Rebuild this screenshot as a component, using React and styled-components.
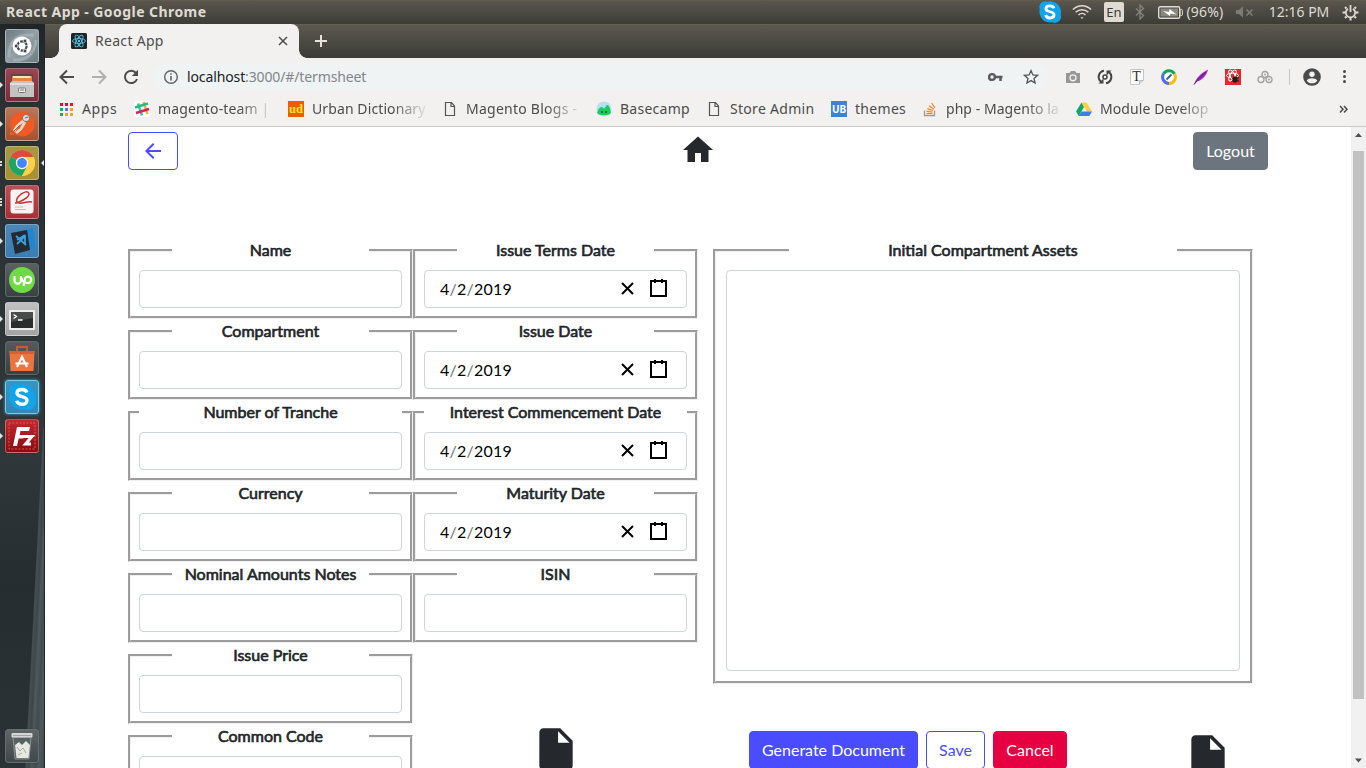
import React from "react";
import styled, { createGlobalStyle } from "styled-components";

const GlobalStyle = createGlobalStyle`
  *, *::before, *::after { box-sizing: border-box; }
  html, body, #root { height: 100%; }
  body { margin: 0; overflow: hidden; background: #fff; }
`;

const UI_FONT = `"Noto Sans", "Open Sans", sans-serif`;
const PAGE_FONT = `Lato, "Liberation Sans", sans-serif`;

const Desktop = styled.div`
  width: 1366px;
  height: 768px;
  display: flex;
  flex-direction: column;
  overflow: hidden;
`;

/* ---------- system menu bar ---------- */
const MenuBar = styled.header`
  flex: none;
  height: 24px;
  display: flex;
  align-items: center;
  padding: 0 7px 0 6px;
  background: linear-gradient(#64614f 0, #5a564d 1px, #3d3c37 24px);
  font: 14px/24px ${UI_FONT};
  color: #dfdbd2;
`;
const WindowTitle = styled.span`
  flex: 1;
  font-weight: 700;
  letter-spacing: 0.44px;
  white-space: nowrap;
`;
const Indicator = styled.div`
  flex: none;
  width: ${(p) => p.$w}px;
  margin-left: ${(p) => p.$gap}px;
  height: 24px;
  display: flex;
  align-items: center;
  justify-content: center;
  white-space: nowrap;
  letter-spacing: ${(p) => p.$ls || 0}px;
  svg { flex: none; }
`;
const Keyboard = styled.div`
  width: 20px;
  height: 20px;
  border-radius: 2px;
  background: #dfdbd2;
  color: #3d3c37;
  font: 13px/20px ${UI_FONT};
  text-align: center;
`;

const Workspace = styled.div`
  flex: 1;
  min-height: 0;
  display: flex;
`;

/* ---------- launcher ---------- */
const Launcher = styled.nav`
  flex: none;
  width: 45px;
  display: flex;
  flex-direction: column;
  padding: 5px 0 5px 0;
  gap: 5px;
  border-right: 1px solid #22282a;
  background:
    linear-gradient(93deg, transparent 69%, #465053 71%, #3d4649 76%, #4f585b 80%, #424b4e 86%, #50595c 92%, #3f484b 100%) 0 100% / 100% 340px no-repeat,
    linear-gradient(#1f2528 0, #2a3134 60px, #2c3437 250px, #30383b 420px, #262d30 560px, #2b3336 100%);
`;
const LaunchRow = styled.div`
  flex: none;
  height: 34px;
  display: flex;
  align-items: center;
  margin-top: ${(p) => (p.$last ? "auto" : "0")};
`;
const Pips = styled.div`
  width: 5px;
  height: 34px;
  display: flex;
  flex-direction: column;
  align-items: flex-start;
  justify-content: center;
  gap: 1px;
`;
const Arrow = styled.i`
  border: 3px solid transparent;
  border-left-color: ${(p) => (p.$left ? "transparent" : "#e4e6e6")};
  border-right-color: ${(p) => (p.$left ? "#e4e6e6" : "transparent")};
  border-left-width: ${(p) => (p.$left ? 0 : 3)}px;
  border-right-width: ${(p) => (p.$left ? 3 : 0)}px;
`;
const Pip = styled.i`
  width: 2px;
  height: 2px;
  background: #d7dada;
`;
const Tile = styled.div`
  width: 34px;
  height: 34px;
  margin-right: 2px;
  border-radius: 3px;
  border: 1px solid ${(p) => p.$edge || "rgba(255,255,255,.3)"};
  background: ${(p) => p.$bg};
  box-shadow: ${(p) => (p.$glow ? "0 0 3px #4ab4dc" : "0 0 1px rgba(0,0,0,.6)")};
  svg { display: block; margin: -1px; }
`;

/* ---------- browser ---------- */
const Browser = styled.main`
  flex: 1;
  min-width: 0;
  display: flex;
  flex-direction: column;
`;
const TabStrip = styled.div`
  flex: none;
  height: 34px;
  display: flex;
  padding-left: 14px;
  background: linear-gradient(#6b6856 0, #5b594f 1px, #3c3b36 34px);
`;
const Tab = styled.div`
  position: relative;
  width: 240px;
  height: 34px;
  display: flex;
  align-items: center;
  padding: 0 11px 0 12px;
  border-radius: 8px 8px 0 0;
  background: #f2f1f0;
  color: #4c4c4c;
  font: 14px/34px ${UI_FONT};
  &::before, &::after {
    content: "";
    position: absolute;
    bottom: 0;
    width: 8px;
    height: 8px;
  }
  &::before { left: -8px; background: radial-gradient(circle at 0 0, transparent 7.5px, #f2f1f0 8px); }
  &::after { right: -8px; background: radial-gradient(circle at 100% 0, transparent 7.5px, #f2f1f0 8px); }
`;
const TabTitle = styled.span`
  flex: 1;
  margin-left: 8px;
  letter-spacing: 0.3px;
`;
const NewTab = styled.div`
  margin: 11px 0 0 16px;
  svg { display: block; }
`;
const Toolbar = styled.div`
  flex: none;
  height: 37px;
  display: flex;
  align-items: center;
  padding: 0 14px;
  background: #f2f1f0;
`;
const NavButton = styled.div`
  width: 16px;
  height: 16px;
  margin-right: 16px;
  svg { display: block; }
`;
const Omnibox = styled.div`
  width: 896px;
  height: 28px;
  margin-left: -2px;
  display: flex;
  align-items: center;
  padding: 0 10px;
  border-radius: 14px;
  background: #eff3f4;
  color: #80868b;
  font: 14px/28px ${UI_FONT};
  svg { display: block; }
`;
const Url = styled.span`
  flex: 1;
  margin-left: 8px;
  letter-spacing: -0.12px;
  b { font-weight: 400; color: #202124; }
`;
const StarSlot = styled.div`
  margin-left: 20px;
`;
const Extensions = styled.div`
  display: flex;
  align-items: center;
  gap: 16px;
  margin-left: 16px;
  svg { display: block; }
`;
const Divider = styled.div`
  width: 1px;
  height: 16px;
  margin: 0 13px 0 16px;
  background: #c4c4c4;
`;
const MenuDots = styled.div`
  margin-left: 22px;
  display: flex;
  flex-direction: column;
  gap: 2px;
`;
const Dot = styled.i`
  width: 3px;
  height: 3px;
  border-radius: 50%;
  background: #4a4a4a;
`;
const BookmarkBar = styled.div`
  flex: none;
  height: 32px;
  display: flex;
  align-items: flex-start;
  padding: 4px 0 0 13px;
  background: #f2f1f0;
  border-bottom: 1px solid #cbcac9;
  color: #4c4c4c;
  font: 14px/20px ${UI_FONT};
`;
const Bookmark = styled.div`
  flex: none;
  width: ${(p) => p.$w}px;
  height: 20px;
  display: flex;
  align-items: center;
  gap: 8px;
  svg { display: block; flex: none; }
`;
const BookmarkText = styled.span`
  white-space: nowrap;
  letter-spacing: ${(p) => p.$ls || 0}px;
  mask-image: ${(p) => (p.$fade ? "linear-gradient(90deg, #000 80px, rgba(0,0,0,.15) 112px)" : "none")};
`;
const More = styled.div`
  margin: 2px 0 0 auto;
  padding-right: 18px;
  svg { display: block; }
`;

/* ---------- web page ---------- */
const Viewport = styled.div`
  flex: 1;
  min-height: 0;
  display: flex;
  background: #fff;
`;
const Page = styled.div`
  flex: 1;
  min-width: 0;
  overflow: hidden;
  padding: 5px 83px 0;
  color: #212529;
  font: 16px/24px ${PAGE_FONT};
`;
const Scrollbar = styled.div`
  flex: none;
  width: 15px;
  display: flex;
  flex-direction: column;
  align-items: center;
  background: #f1f1f1;
  svg { display: block; flex: none; }
`;
const Thumb = styled.div`
  width: 11px;
  height: 548px;
  margin: 9px 0 auto;
  background: #c1c1c1;
`;
const TopRow = styled.div`
  width: 1140px;
  height: 38px;
  display: grid;
  grid-template-columns: 1fr 36px 1fr;
  svg { display: block; }
`;
const Button = styled.button`
  height: 38px;
  width: ${(p) => (p.$w ? p.$w + "px" : "auto")};
  padding: 0;
  display: flex;
  align-items: center;
  justify-content: center;
  justify-self: ${(p) => (p.$end ? "end" : "start")};
  border: 1px solid ${(p) => p.$line};
  border-radius: 4px;
  background: ${(p) => p.$fill || "#fff"};
  color: ${(p) => p.$ink || "#fff"};
  font: 16px/24px ${PAGE_FONT};
  white-space: nowrap;
`;
const Form = styled.div`
  width: 1140px;
  display: grid;
  grid-template-columns: 285px 285px 570px;
  margin-top: 68px;
`;
const Column = styled.div`
  display: flex;
  flex-direction: column;
  padding: ${(p) => (p.$wide ? "0 15px" : "0")};
`;
const Group = styled.fieldset`
  width: 100%;
  min-width: 0;
  margin: 0;
  padding: ${(p) => p.$pad || 8}px;
  padding-top: 8px;
  border: 3px groove #f0f0f0;
`;
const Legend = styled.legend`
  width: ${(p) => p.$w || "75%"};
  height: 24px;
  margin: 0 auto;
  padding: 0;
  text-align: center;
  font-weight: 400;
  -webkit-text-stroke: 0.65px #212529;
`;
const Input = styled.div`
  width: 100%;
  height: ${(p) => p.$h || 38}px;
  display: flex;
  align-items: center;
  padding: 0 18px 0 15px;
  border: 1px solid #ced4da;
  border-radius: 4px;
  background: #fff;
  svg { display: block; margin-left: 12px; margin-top: -1px; }
`;
const DateValue = styled.span`
  flex: 1;
  color: #000;
  letter-spacing: 0.25px;
  i { font-style: normal; color: #6d6d6d; }
`;
const FileSlot = styled.div`
  margin: ${(p) => p.$m};
  svg { display: block; }
`;
const Actions = styled.div`
  display: flex;
  gap: 8px;
  margin: 47px 0 0 36px;
`;

/* ---------- launcher artwork ---------- */
const S34 = ({ children }) => (
  <svg width="34" height="34" viewBox="0 0 34 34">{children}</svg>
);
const Ubuntu = () => (
  <S34>
    <path d="M4 28C4 10 12 5 29 6M8 31c12 1 22-5 23-20" stroke="#b1bbc0" strokeWidth="3" fill="none" opacity=".6" />
    <circle cx="17" cy="17" r="9.5" fill="#fff" />
    <circle cx="17" cy="17" r="4.6" fill="none" stroke="#444b50" strokeWidth="2.2" strokeDasharray="8.4 1.2" />
    <g fill="#444b50" stroke="#fff" strokeWidth=".7">
      <circle cx="11.2" cy="17" r="1.9" /><circle cx="20" cy="12" r="1.9" /><circle cx="20" cy="22" r="1.9" />
    </g>
  </S34>
);
const Files = () => (
  <S34>
    <path d="M6 6h22v9H6z" fill="#5b4a42" /><path d="M7 8h20v7H7z" fill="#e8843c" />
    <path d="M8 8h17l1 2H8z" fill="#fbe3c5" /><path d="M5 15l2-2h20l2 2v14H5z" fill="#c3c3c1" />
    <path d="M5 15h24v2H5z" fill="#dededc" /><rect x="13.5" y="20" width="7" height="4.5" rx="1" fill="#eee" stroke="#777" />
    <path d="M15 22h4" stroke="#777" />
  </S34>
);
const Postman = () => (
  <S34>
    <circle cx="17.3" cy="17" r="12.3" fill="#f15a24" />
    <path d="M5 24l5 4H5z" fill="#f15a24" />
    <path d="M19 13l-7 6-3 5M20 15l-4 7-5 4" stroke="#efd9c9" strokeWidth="2.6" fill="none" />
    <circle cx="21" cy="11" r="3.6" fill="#d8d8d4" stroke="#6d6662" strokeWidth=".8" />
    <path d="M20 11l3-1" stroke="#6d6662" />
    <path d="M9 24l6-6" stroke="#6d6662" strokeWidth=".9" />
  </S34>
);
const Chrome = () => (
  <S34>
    <circle cx="17" cy="17" r="13" fill="#ffcf45" />
    <path d="M17 17L5.7 10.5A13 13 0 0 1 28.3 10.5z" fill="#dd4b3e" />
    <path d="M17 17L5.7 10.5A13 13 0 0 0 17 30l5-9z" fill="#1fa463" />
    <path d="M17 11h11.5A13 13 0 0 1 17 30l5.2-10z" fill="#ffcf45" />
    <circle cx="17" cy="17" r="6.2" fill="#f3f3f0" /><circle cx="17" cy="17" r="4.9" fill="#4285f4" />
  </S34>
);
const Evince = () => (
  <S34>
    <rect x="5.5" y="4.5" width="23" height="24" rx="3" fill="#f5f4f2" />
    <path d="M10 18c3 0 14-5 14-9s-7-2-11 3c-3 4-1 7 4 6 4-.5 7-2 10-1" fill="none" stroke="#cc3236" strokeWidth="1.5" />
    <path d="M10 22h8M10 24.5h11" stroke="#d8a5a5" strokeWidth=".8" />
  </S34>
);
const Code = () => (
  <S34>
    <path d="M6 10l14-4 8-2 2 20-8 3z" fill="#1f86cf" /><path d="M6 9l16-3 3 20-15 4z" fill="#242a33" />
    <path d="M20 11l-8 5M11 12l10 9M20 11v9M12 20l8-8" stroke="#3c9fe0" strokeWidth="1.8" fill="none" />
  </S34>
);
const Upwork = () => (
  <S34>
    <circle cx="17" cy="17" r="13" fill="#6fda44" />
    <path d="M9.5 13v4.5a3.2 3.2 0 0 0 6.4 0V13M15.9 14c1 3 2 4.500 3.500 5.500M18.500 23l1.500-7.500a3.200 3.200 0 1 1 2.500 4.500c-2 0-3.500-1.500-4.500-3" fill="none" stroke="#fff" strokeWidth="2.200" />
  </S34>
);
const Terminal = () => (
  <S34>
    <rect x="4" y="8" width="26" height="20" rx="1" fill="#ececec" /><rect x="6" y="10" width="22" height="16" fill="#2b2d2d" />
    <path d="M6 10h22v6L6 20z" fill="#4a4c4c" /><path d="M8.500 12.500l3 2-3 2M13 18h4.500" fill="none" stroke="#fff" strokeWidth="1.300" />
  </S34>
);
const Software = () => (
  <S34>
    <path d="M12 10V6h10v4" fill="none" stroke="#c85a38" strokeWidth="2" /><path d="M4.500 10h25l-1 20h-23z" fill="#ec7440" />
    <path d="M4.500 10h25v3h-25z" fill="#d95f35" /><path d="M12 26l5-10 5 10M10.500 22.500h13" fill="none" stroke="#fff" strokeWidth="2.200" />
  </S34>
);
const SkypeMark = ({ size }) => (
  <svg width={size} height={size} viewBox="0 0 34 34">
    <path d="M4 10a7.500 7.500 0 0 1 10-5.500A13 13 0 0 1 30 20a7.500 7.500 0 0 1-10 9.500A13 13 0 0 1 4.500 14z" fill="#10a5ea" />
    <path d="M22 12.500c-1-2.300-3-3-5-3-2.800 0-5 1.200-5 3.500 0 4.800 10 2.600 10 7.400 0 2.600-2.300 3.900-5 3.900-2.500 0-4.600-1.200-5.400-3.600" fill="none" stroke="#fff" strokeWidth="3.400" />
  </svg>
);
const FileZilla = () => (
  <S34>
    <rect x="4" y="4" width="26" height="26" fill="none" stroke="#e56767" strokeDasharray="2 1.500" strokeWidth=".8" />
    <path d="M8 27l4-19h13l-1 4h-8.500l-.8 4H19l-.8 3.600h-4.500L12 27z" fill="#fff" />
    <path d="M17.500 17.500H27l-6.500 7.500H26" stroke="#fff" strokeWidth="3" fill="none" />
  </S34>
);
const Trash = () => (
  <S34>
    <path d="M8 8l2 22h14l2-22z" fill="#596061" stroke="#8d9292" /><path d="M10 16l4-3 3 3 4-4 4 4-1.500 13h-12z" fill="#e6e6e2" />
    <path d="M12 18l3 4 3-3 3 5M13 26l4-2" stroke="#a9aaa6" fill="none" /><rect x="6.500" y="4" width="21" height="4.500" rx="1" fill="#d5d6d4" />
    <path d="M8 6.500h18" stroke="#a0a3a3" />
  </S34>
);

const LAUNCHER = [
  { Icon: Ubuntu, bg: "linear-gradient(135deg,#6c7b83,#93a1a7 50%,#6c7b83)" },
  { Icon: Files, bg: "linear-gradient(#9c4554,#7b2b3d)", arrow: true },
  { Icon: Postman, bg: "linear-gradient(#b8775a,#a5522f)", arrow: true },
  { Icon: Chrome, bg: "linear-gradient(#a8964a,#a89132)", pips: 2, active: true },
  { Icon: Evince, bg: "linear-gradient(#bb5056,#a92e35)", pips: 3 },
  { Icon: Code, bg: "linear-gradient(#4b87b5,#3b7db2)", arrow: true },
  { Icon: Upwork, bg: "linear-gradient(#5b6061,#3c4244)", edge: "#60686a" },
  { Icon: Terminal, bg: "linear-gradient(#c0c0c0,#a3a3a3)", arrow: true },
  { Icon: Software, bg: "linear-gradient(#555a5c,#394042)", edge: "#60686a" },
  { Icon: () => <SkypeMark size={34} />, bg: "linear-gradient(#3a93c0,#3289b7)", edge: "#6ed0f0", glow: true, arrow: true },
  { Icon: FileZilla, bg: "linear-gradient(#c02a30,#8c0a10)", arrow: true },
  { Icon: Trash, bg: "linear-gradient(#5d6566,#3f484a)", edge: "#667072", last: true },
];

/* ---------- small icons ---------- */
const I16 = ({ children, size = 16, box = 16 }) => (
  <svg width={size} height={size} viewBox={`0 0 ${box} ${box}`}>{children}</svg>
);
const PageGlyph = () => (
  <I16><path d="M3.500 1.500h6l3 3.500v9.500h-9zM9 1.500v4h3.500" fill="none" stroke="#555" strokeWidth="1.200" /></I16>
);

const BOOKMARKS = [
  { text: "Apps", w: 76, ls: 0.6, icon: (
    <I16>{["#f00040", "#e8003c", "#f01030", "#18a860", "#3f7fea", "#e8a818", "#18a860", "#f0a818", "#e8a818"].map((c, i) => (
      <rect key={i} x={2 + (i % 3) * 5} y={2 + Math.floor(i / 3) * 5} width="3" height="3" fill={c} />
    ))}</I16>) },
  { text: "magento-team |", fade: true, w: 154, ls: 0.15, icon: (
    <I16><rect width="16" height="16" rx="2" fill="#fff" />
      <path d="M4 2.500l4 12" stroke="#36c5ab" strokeWidth="2.400" /><path d="M9.500 1l4 12" stroke="#ecb22e" strokeWidth="2.400" />
      <path d="M1 6.500l13-4" stroke="#2eb67d" strokeWidth="2.400" /><path d="M2 12l13-4" stroke="#e01e5a" strokeWidth="2.400" /></I16>) },
  { text: "Urban Dictionary", fade: true, w: 154, ls: 0.1, icon: (
    <I16><rect width="16" height="16" fill="#ef5b0c" /><text x="8" y="12" textAnchor="middle" fontFamily="Liberation Serif, serif" fontWeight="700" fontSize="12.500" fill="#ffe921">ud</text></I16>) },
  { text: "Magento Blogs -", fade: true, w: 154, ls: 0.25, icon: <PageGlyph /> },
  { text: "Basecamp", w: 110, ls: 0.25, icon: (
    <I16><circle cx="8" cy="8" r="7.500" fill="#b9dcf7" /><path d="M1 12c1-4 3-6 4.500-6S8 8 8.500 7.500 10 4 11.500 4 14.500 8 15 12c-2 3-12 3-14 0z" fill="#16cf5b" />
      <circle cx="6" cy="11" r=".8" /><circle cx="10" cy="11" r=".8" /></I16>) },
  { text: "Store Admin", w: 125, ls: 0.3, icon: <PageGlyph /> },
  { text: "themes", w: 91, ls: 0.3, icon: (
    <I16><rect width="16" height="16" fill="#3c84d8" /><text x="8" y="12" textAnchor="middle" fontFamily="Noto Sans, sans-serif" fontWeight="700" fontSize="10" fill="#fff">UB</text></I16>) },
  { text: "php - Magento la", fade: true, w: 154, ls: 0.05, icon: (
    <I16><path d="M2.500 9.500v5h10v-5" fill="none" stroke="#9a9a9a" strokeWidth="1.300" />
      <path d="M4.500 12.500h6M4.600 10.300l6 .7M5.400 7.600l5.600 1.900M7 4.700l4.800 3.500M9.600 2l3.400 4.800" stroke="#f08024" strokeWidth="1.200" /></I16>) },
  { text: "Module Develop", fade: true, w: 154, ls: 0.1, icon: (
    <I16><path d="M5.500 1.500L0 10.500l2.700 4.500L8 6z" fill="#11a861" /><path d="M5.500 1.500h5L16 10.500h-5.300z" fill="#ffcf48" /><path d="M5.400 10.500H16L13.300 15H2.700z" fill="#3f7ee8" /></I16>) },
];

const ClearIcon = () => (
  <svg width="19" height="19" viewBox="0 0 19 19" stroke="#000" strokeWidth="2"><path d="M4 4l11 11M15 4L4 15" /></svg>
);
const CalendarIcon = () => (
  <svg width="19" height="19" viewBox="0 0 19 19" stroke="#000" strokeWidth="2" fill="none">
    <rect x="2" y="2" width="15" height="15" /><path d="M6 0v4M13 0v4" />
  </svg>
);
const FileIcon = () => (
  <svg width="50" height="50" viewBox="0 0 24 24" fill="#25292d">
    <path d="M6 2c-1.100 0-1.990.9-1.990 2L4 20c0 1.100.89 2 1.990 2H18c1.100 0 2-.9 2-2V8l-6-6H6zm7 7V3.500L18.500 9H13z" />
  </svg>
);

const Field = ({ label, full, date }) => (
  <Group>
    <Legend $w={full ? "100%" : undefined}>{label}</Legend>
    <Input>
      {date && (
        <>
          <DateValue>4<i>/</i>2<i>/</i>2019</DateValue>
          <ClearIcon />
          <CalendarIcon />
        </>
      )}
    </Input>
  </Group>
);

const Indicators = () => (
  <>
    <Indicator $w={22} $gap={0}><SkypeMark size={28} /></Indicator>
    <Indicator $w={20} $gap={11}>
      <svg width="20" height="16" viewBox="0 0 20 16" fill="none" stroke="#dfdbd2" strokeWidth="1.600">
        <path d="M1 5.500c5-5 13-5 18 0M3.700 8.300c3.500-3.500 9-3.500 12.600 0M6.500 11c2-2 5-2 7 0" /><path d="M8.500 13.200h3L10 15z" fill="#dfdbd2" stroke="none" />
      </svg>
    </Indicator>
    <Indicator $w={20} $gap={12}><Keyboard>En</Keyboard></Indicator>
    <Indicator $w={10} $gap={11}>
      <svg width="10" height="16" viewBox="0 0 10 16" fill="none" stroke="#86837b" strokeWidth="1.300"><path d="M1 4.500l7.500 7L5 15V1l3.500 3.500L1 11.500" /></svg>
    </Indicator>
    <Indicator $w={25} $gap={13}>
      <svg width="25" height="13" viewBox="0 0 25 13">
        <rect x=".7" y=".7" width="21" height="11.600" rx="1.500" fill="none" stroke="#dfdbd2" strokeWidth="1.400" /><rect x="2.500" y="2.500" width="17.500" height="8" fill="#8a877f" />
        <rect x="22" y="3.500" width="2.400" height="6" rx="1" fill="none" stroke="#dfdbd2" /><path d="M5 5l6 1 .5-3 7 5.500-6-1-.5 2.500z" fill="#fff" />
      </svg>
    </Indicator>
    <Indicator $w={40} $gap={2} $ls={0.2}>(96%)</Indicator>
    <Indicator $w={18} $gap={11}>
      <svg width="18" height="12" viewBox="0 0 18 12" fill="#7f7c74"><path d="M0 4h3l4-3.500v11L3 8H0z" /><path d="M10.500 3.500l6 6M16.500 3.500l-6 6" stroke="#7f7c74" strokeWidth="1.700" /></svg>
    </Indicator>
    <Indicator $w={62} $gap={14}>12:16 PM</Indicator>
    <Indicator $w={17} $gap={12}>
      <svg width="17" height="17" viewBox="0 0 17 17" fill="none" stroke="#dfdbd2">
        <path d="M6 4.700a4.700 4.700 0 1 0 5 0" strokeWidth="1.800" /><path d="M8.500 1v7" strokeWidth="1.800" />
        <path d="M3 3l1.500 1.500M14 3l-1.500 1.500M.5 8.500h3M16.500 8.500h-3M3 14l1.500-1.500M14 14l-1.500-1.500M8.500 16.500v-3" strokeWidth="2" />
      </svg>
    </Indicator>
  </>
);

const ExtensionIcons = () => (
  <>
    <I16><path d="M1 4h3.500L6 2h4l1.500 2H15v10H1z" fill="#979797" /><circle cx="8" cy="8.800" r="3.600" fill="#f2f1f0" /><circle cx="8" cy="8.800" r="2.300" fill="#979797" /></I16>
    <I16><path d="M7 1.800A6.300 6.300 0 0 0 4 12.900M9 14.200a6.300 6.300 0 0 0 3-11.100" fill="none" stroke="#444" strokeWidth="2" /><path d="M1.500 14.500h5v-5zM14.500 1.500h-5v5z" fill="#444" /><circle cx="8" cy="8" r="2" fill="none" stroke="#444" strokeWidth="1.500" /></I16>
    <I16><path d="M1.500.5h13v11l-4 4h-9z" fill="#fdfdfd" stroke="#c8c8c8" /><path d="M14.500 11.500h-4v4" fill="#ddd" stroke="#bbb" /><text x="7.500" y="12" textAnchor="middle" fontFamily="Liberation Serif, serif" fontSize="14" fill="#333">T</text></I16>
    <I16><circle cx="8" cy="8" r="6.300" fill="#fff" /><path d="M2.500 4.800A6.400 6.400 0 0 1 13.500 4.800" fill="none" stroke="#0ba55c" strokeWidth="3" /><path d="M13.500 4.800A6.400 6.400 0 0 1 8 14.400" fill="none" stroke="#fbbc05" strokeWidth="3" /><path d="M8 14.400A6.400 6.400 0 0 1 2.500 4.800" fill="none" stroke="#5367f5" strokeWidth="3" /><path d="M5.500 10.500l5-5" stroke="#3455a4" strokeWidth="1.800" /></I16>
    <I16><path d="M1 15.500C3 9 8 4 15 .5 14 6 9 11.500 4 12.500z" fill="#a12bc2" /><path d="M1 15.500C5 10 9 6 13 3" stroke="#5d1779" fill="none" /></I16>
    <I16><rect width="16" height="16" fill="#df2b2b" /><g fill="none" stroke="#fff" strokeWidth="1"><ellipse cx="7.500" cy="6.500" rx="6" ry="2.300" /><ellipse cx="7.500" cy="6.500" rx="6" ry="2.300" transform="rotate(60 7.500 6.500)" /><ellipse cx="7.500" cy="6.500" rx="6" ry="2.300" transform="rotate(-60 7.500 6.500)" /></g><ellipse cx="10" cy="10.500" rx="2.600" ry="3.200" fill="#27191a" /><path d="M6.500 8.500l7.500 4M6.500 12.500l7.500-4" stroke="#27191a" /></I16>
    <I16><g fill="none" stroke="#a3a3a3" strokeWidth="1.400"><circle cx="8" cy="5.500" r="3" /><circle cx="4" cy="10.500" r="3" /><circle cx="12" cy="10.500" r="3" /></g><g fill="#a3a3a3"><circle cx="8" cy="5.500" r="1" /><circle cx="12" cy="10.500" r="1" /></g></I16>
  </>
);

const LEFT = [["Name"], ["Compartment"], ["Number of Tranche", true], ["Currency"], ["Nominal Amounts Notes"], ["Issue Price"], ["Common Code"]];
const MIDDLE = [["Issue Terms Date"], ["Issue Date"], ["Interest Commencement Date", true], ["Maturity Date"]];

export default function App() {
  return (
    <Desktop>
      <GlobalStyle />
      <MenuBar>
        <WindowTitle>React App - Google Chrome</WindowTitle>
        <Indicators />
      </MenuBar>
      <Workspace>
        <Launcher>
          {LAUNCHER.map(({ Icon, bg, edge, glow, arrow, pips, active, last }, i) => (
            <LaunchRow key={i} $last={last}>
              <Pips>
                {arrow && <Arrow />}
                {pips && Array.from({ length: pips }, (_, n) => <Pip key={n} />)}
              </Pips>
              <Tile $bg={bg} $edge={edge} $glow={glow}><Icon /></Tile>
              {active && <Arrow $left />}
            </LaunchRow>
          ))}
        </Launcher>
        <Browser>
          <TabStrip>
            <Tab>
              <svg width="16" height="16" viewBox="0 0 16 16">
                <rect width="16" height="16" rx="1.500" fill="#20232a" />
                <g fill="none" stroke="#55c4e0" strokeWidth=".9">
                  <ellipse cx="8" cy="8" rx="6.500" ry="2.500" /><ellipse cx="8" cy="8" rx="6.500" ry="2.500" transform="rotate(60 8 8)" /><ellipse cx="8" cy="8" rx="6.500" ry="2.500" transform="rotate(120 8 8)" />
                </g>
                <circle cx="8" cy="8" r="1.200" fill="#55c4e0" />
              </svg>
              <TabTitle>React App</TabTitle>
              <svg width="10" height="10" viewBox="0 0 10 10" stroke="#4c4c4c" strokeWidth="1.500"><path d="M1 1l8 8M9 1L1 9" /></svg>
            </Tab>
            <NewTab>
              <svg width="12" height="12" viewBox="0 0 12 12" stroke="#e4e2da" strokeWidth="2"><path d="M6 0v12M0 6h12" /></svg>
            </NewTab>
          </TabStrip>
          <Toolbar>
            <NavButton><I16><path d="M15 8H2M8 1.500L1.500 8 8 14.500" fill="none" stroke="#4c4c4c" strokeWidth="2" /></I16></NavButton>
            <NavButton><I16><path d="M1 8h13M8 1.500L14.500 8 8 14.500" fill="none" stroke="#b0afae" strokeWidth="2" /></I16></NavButton>
            <NavButton><I16><path d="M13 4A6.200 6.200 0 1 0 14 10" fill="none" stroke="#4c4c4c" strokeWidth="2" /><path d="M15 .8v6.200H8.800z" fill="#4c4c4c" /></I16></NavButton>
            <Omnibox>
              <I16><circle cx="8" cy="8" r="6.300" fill="none" stroke="#5f6368" strokeWidth="1.400" /><path d="M8 7v4.500M8 4.300v1.500" stroke="#5f6368" strokeWidth="1.600" /></I16>
              <Url><b>localhost</b>:3000/#/termsheet</Url>
              <svg width="15" height="10" viewBox="0 0 15 10"><circle cx="4" cy="5" r="2.900" fill="none" stroke="#5a5a5f" strokeWidth="2.400" /><path d="M7 5h7.500M12.500 5v4" stroke="#5a5a5f" strokeWidth="2.500" /></svg>
              <StarSlot><I16><path d="M8 1.600l1.900 4.300 4.700.4-3.600 3.100 1.100 4.600L8 11.600 3.900 14 5 9.400 1.400 6.300l4.700-.4z" fill="none" stroke="#555" strokeWidth="1.300" /></I16></StarSlot>
            </Omnibox>
            <Extensions><ExtensionIcons /></Extensions>
            <Divider />
            <svg width="18" height="18" viewBox="0 0 18 18"><circle cx="9" cy="9" r="8.800" fill="#4a4a4a" /><circle cx="9" cy="6.300" r="2.700" fill="#f2f1f0" /><path d="M3.700 12.500c1.500-3 9-3 10.600 0-2 3.800-8.600 3.800-10.600 0z" fill="#f2f1f0" /></svg>
            <MenuDots><Dot /><Dot /><Dot /></MenuDots>
          </Toolbar>
          <BookmarkBar>
            {BOOKMARKS.map((b) => (
              <Bookmark key={b.text} $w={b.w}>
                {b.icon}
                <BookmarkText $fade={b.fade} $ls={b.ls}>{b.text}</BookmarkText>
              </Bookmark>
            ))}
            <More><svg width="9" height="16" viewBox="0 0 9 16" fill="none" stroke="#4a4a4a" strokeWidth="1.500"><path d="M1 5l3 3.200L1 11.500M5 5l3 3.200L5 11.500" /></svg></More>
          </BookmarkBar>
          <Viewport>
            <Page>
              <TopRow>
                <Button $w={50} $line="#4a4dff" $ink="#4a4dff">
                  <svg width="24" height="24" viewBox="0 0 24 24" fill="#4a4dff"><path d="M20 11H7.830l5.590-5.590L12 4l-8 8 8 8 1.410-1.410L7.830 13H20v-2z" /></svg>
                </Button>
                <svg width="36" height="36" viewBox="0 0 24 24" fill="#25292d"><path d="M10 20v-6h4v6h5v-8h3L12 3 2 12h3v8z" /></svg>
                <Button $w={75} $end $line="#6c757d" $fill="#6c757d">Logout</Button>
              </TopRow>
              <Form>
                <Column>
                  {LEFT.map(([label, full]) => <Field key={label} label={label} full={full} />)}
                </Column>
                <Column>
                  {MIDDLE.map(([label, full]) => <Field key={label} label={label} full={full} date />)}
                  <Field label="ISIN" />
                  <FileSlot $m="81px 0 0 118px"><FileIcon /></FileSlot>
                </Column>
                <Column $wide>
                  <Group $pad={10}>
                    <Legend $w="388px">Initial Compartment Assets</Legend>
                    <Input $h={401} />
                  </Group>
                  <Actions>
                    <Button $w={169} $line="#4a4dff" $fill="#4a4dff">Generate Document</Button>
                    <Button $w={59} $line="#4a4dff" $ink="#4a4dff">Save</Button>
                    <Button $w={74} $line="#e60042" $fill="#e60042">Cancel</Button>
                    <FileSlot $m="0 0 0 108px"><FileIcon /></FileSlot>
                  </Actions>
                </Column>
              </Form>
            </Page>
            <Scrollbar>
              <svg width="15" height="15" viewBox="0 0 15 15"><path d="M4 10l3.500-4L11 10z" fill="#505050" /></svg>
              <Thumb />
              <svg width="15" height="15" viewBox="0 0 15 15"><path d="M4 5.500l3.500 4 3.500-4z" fill="#505050" /></svg>
            </Scrollbar>
          </Viewport>
        </Browser>
      </Workspace>
    </Desktop>
  );
}
